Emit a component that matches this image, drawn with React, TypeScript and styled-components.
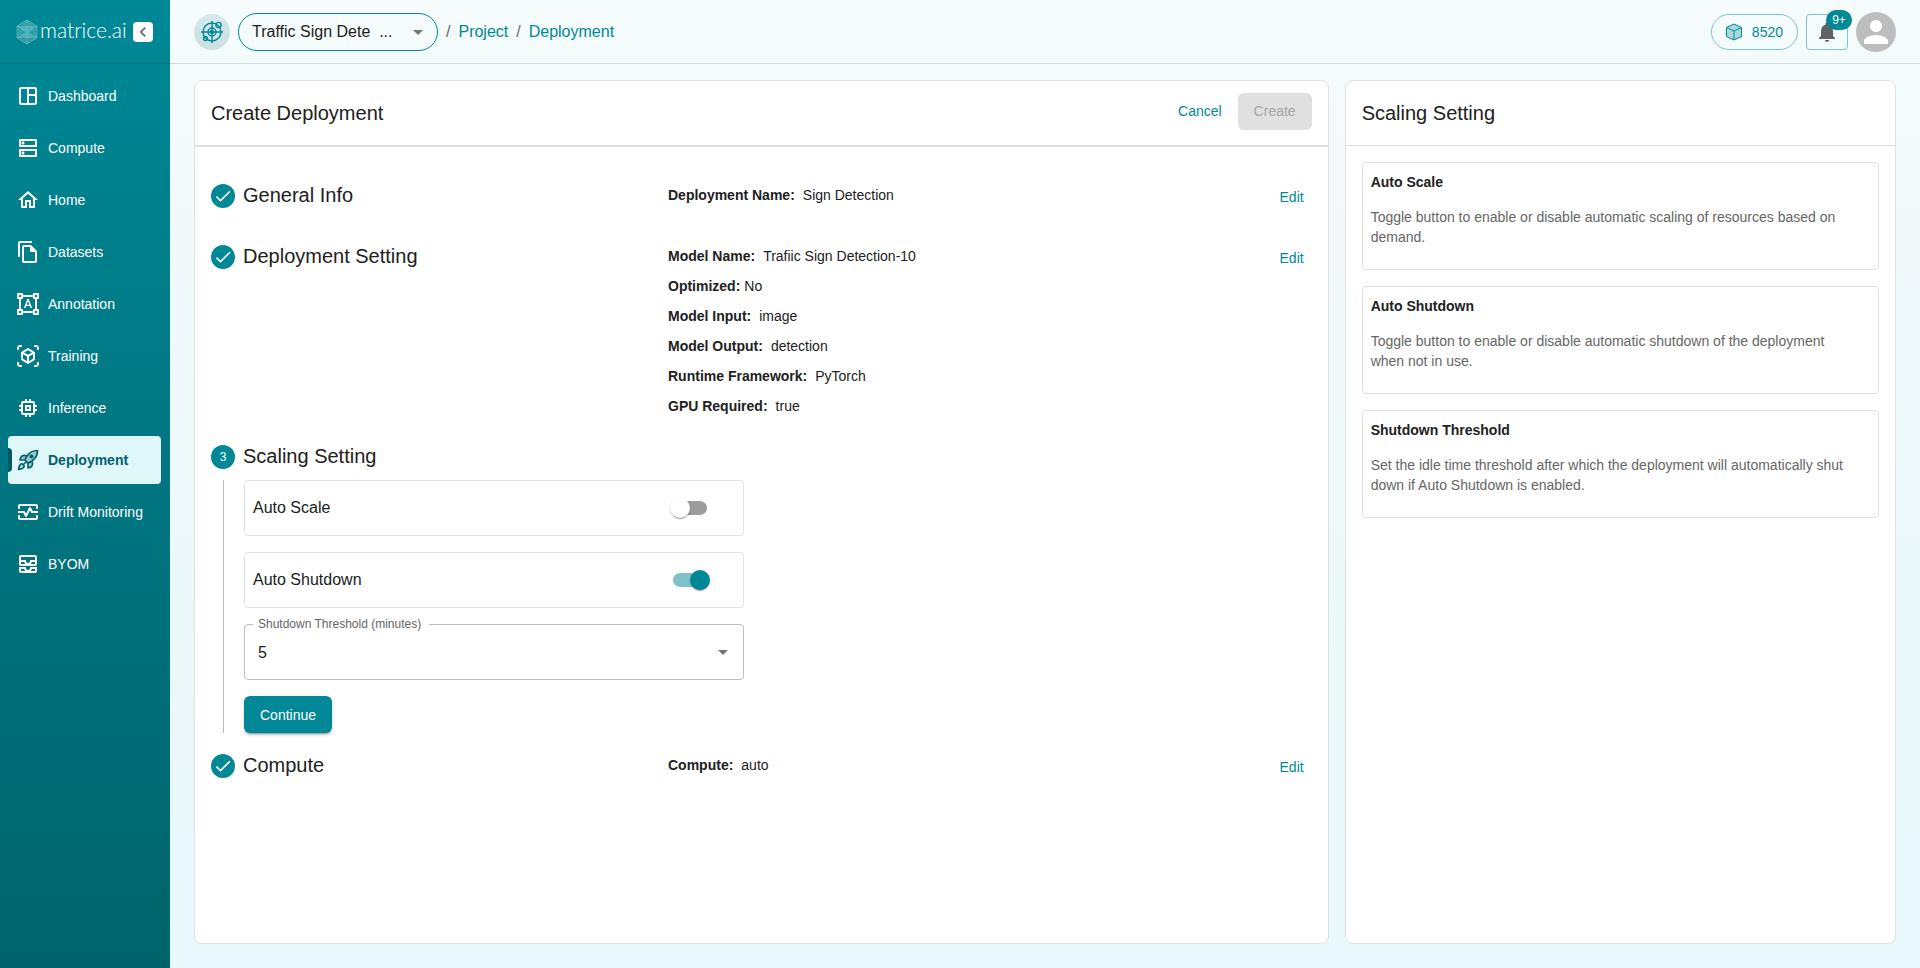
import React, { useState } from "react";
import styled, { createGlobalStyle, css } from "styled-components";
import {
  MdOutlineSpaceDashboard,
  MdOutlineDns,
  MdOutlineHome,
  MdOutlineFileCopy,
  MdFormatShapes,
  MdOutlineViewInAr,
  MdOutlineMemory,
  MdOutlineMonitorHeart,
  MdOutlineAllInbox,
  MdNotifications,
  MdPerson,
  MdArrowDropDown,
  MdCheck,
  MdChevronLeft,
} from "react-icons/md";

const teal = "#008896";
const ink = "#212121";
const line = "#e0e0e0";

const GlobalStyle = createGlobalStyle`
  *, *::before, *::after { box-sizing: border-box; }
  body {
    margin: 0;
    font-family: "Liberation Sans", Arial, sans-serif;
    font-size: 14px;
    line-height: 20px;
    color: ${ink};
  }
  h1, h2, h3, p, dl, dd, ul { margin: 0; padding: 0; }
  button, input, select { font-family: inherit; }
`;

const Page = styled.div`
  display: flex;
  min-height: 100vh;
  background: linear-gradient(180deg, #f5fcfb 0%, #f1f9fb 25%, #ecf9fa 60%, #e8f8fd 100%);
`;

const Sidebar = styled.aside`
  flex: 0 0 170px;
  display: flex;
  flex-direction: column;
  background: linear-gradient(180deg, ${teal} 0%, #00636b 100%);
`;

const Brand = styled.div`
  display: flex;
  align-items: center;
  height: 64px;
  padding-left: 16px;
  border-bottom: 1px solid rgba(0, 60, 70, 0.35);
`;

const BrandName = styled.span`
  width: 95px;
  padding: 0 0 4px 2px;
  color: #fff;
  font-family: Lato, sans-serif;
  font-size: 21px;
  line-height: 24px;
  font-weight: 300;
`;

const CollapseButton = styled.button`
  display: flex;
  align-items: center;
  justify-content: center;
  width: 20px;
  height: 20px;
  padding: 0;
  border: 0;
  border-radius: 4px;
  background: #fff;
  color: #666;
`;

const NavList = styled.ul`
  list-style: none;
  display: flex;
  flex-direction: column;
  gap: 4px;
  padding: 8px 9px 8px 8px;
`;

const NavLink = styled.a<{ $active?: boolean }>`
  position: relative;
  display: flex;
  align-items: center;
  gap: 8px;
  height: 48px;
  padding-left: 8px;
  border-radius: 4px;
  color: #fff;
  text-decoration: none;
  white-space: nowrap;
  svg { flex: none; }
  ${(p) =>
    p.$active &&
    css`
      background: #e0f7fa;
      color: #00626c;
      font-weight: 700;
      &::before {
        content: "";
        position: absolute;
        left: 0;
        top: 12px;
        width: 4px;
        height: 24px;
        border-radius: 0 4px 4px 0;
        background: #005a63;
      }
    `}
`;

const Main = styled.main`
  flex: 1;
  min-width: 0;
  display: flex;
  flex-direction: column;
`;

const TopBar = styled.header`
  display: flex;
  align-items: center;
  justify-content: space-between;
  height: 64px;
  padding: 0 24px;
  border-bottom: 1px solid #d5dcdd;
`;

const TopGroup = styled.div`
  display: flex;
  align-items: center;
  gap: 8px;
`;

const ProjectBadge = styled.span`
  display: flex;
  align-items: center;
  justify-content: center;
  width: 36px;
  height: 36px;
  border-radius: 50%;
  background: linear-gradient(180deg, #d3eaec, #ccdfe0);
`;

const SelectWrap = styled.label`
  display: grid;
  align-items: center;
  > * { grid-area: 1 / 1; }
  > svg {
    justify-self: end;
    margin-right: 8px;
    color: #757575;
    pointer-events: none;
  }
`;

const ProjectSelect = styled.select`
  appearance: none;
  width: 200px;
  height: 38px;
  padding: 0 32px 0 13px;
  border: 1px solid ${teal};
  border-radius: 19px;
  background: transparent;
  color: ${ink};
  font-size: 16px;
`;

const Crumbs = styled.nav`
  display: flex;
  gap: 8px;
  padding-top: 1px;
  font-size: 16px;
  color: #666;
  a { color: ${teal}; text-decoration: none; }
`;

const Credits = styled.button`
  display: flex;
  align-items: center;
  gap: 8px;
  height: 36px;
  padding: 0 14px 0 12px;
  border: 1px solid #80c3ca;
  border-radius: 18px;
  background: transparent;
  color: ${teal};
  font-size: 14px;
`;

const BellButton = styled.button`
  position: relative;
  display: flex;
  align-items: center;
  justify-content: center;
  width: 42px;
  height: 36px;
  padding: 0;
  border: 1px solid #80c3ca;
  border-radius: 4px;
  background: transparent;
  color: #616161;
`;

const BellCount = styled.span`
  position: absolute;
  top: -5px;
  right: -5px;
  min-width: 26px;
  height: 20px;
  border-radius: 10px;
  background: ${teal};
  color: #fff;
  font-size: 12px;
  line-height: 20px;
  text-align: center;
`;

const Avatar = styled.span`
  display: flex;
  align-items: center;
  justify-content: center;
  width: 40px;
  height: 40px;
  border-radius: 50%;
  background: #bdbdbd;
  color: #fff;
`;

const Content = styled.div`
  flex: 1;
  display: flex;
  gap: 16px;
  padding: 16px 24px 24px;
`;

const Panel = styled.section<{ $grow?: boolean }>`
  flex: ${(p) => (p.$grow ? "1136" : "551")} 1 0;
  min-width: 0;
  border: 1px solid ${line};
  border-radius: 8px;
  background: #fff;
`;

const PanelHead = styled.div<{ $thick?: boolean }>`
  display: flex;
  align-items: center;
  justify-content: space-between;
  min-height: ${(p) => (p.$thick ? "66px" : "65px")};
  padding: 0 16px;
  border-bottom: ${(p) => (p.$thick ? "2px" : "1px")} solid ${line};
`;

const Title = styled.h1`
  font-size: 20px;
  line-height: 32px;
  font-weight: 400;
`;

const Actions = styled.div`
  display: flex;
  gap: 8px;
  padding-bottom: 4px;
`;

const Button = styled.button<{ $kind?: "text" | "solid"; $height?: number }>`
  height: ${(p) => p.$height ?? 37}px;
  padding: 0 ${(p) => (p.$kind === "text" ? "8px" : "16px")};
  border: 0;
  border-radius: 6px;
  background: ${(p) => (p.$kind === "text" ? "transparent" : teal)};
  color: ${(p) => (p.$kind === "text" ? teal : "#fff")};
  font-size: 14px;
  ${(p) =>
    p.$kind === "solid" &&
    css`
      box-shadow: 0 3px 1px -2px rgba(0, 0, 0, 0.2), 0 2px 2px rgba(0, 0, 0, 0.14), 0 1px 5px rgba(0, 0, 0, 0.12);
    `}
  &:disabled { background: ${line}; color: #a6a6a6; box-shadow: none; }
`;

const Steps = styled.div`
  display: flex;
  flex-direction: column;
  gap: 16px;
  padding: 32px 16px;
`;

const StepRow = styled.section`
  display: grid;
  grid-template-columns: 457px 1fr auto;
  align-items: start;
  min-height: 45px;
`;

const StepHead = styled.div`
  display: flex;
  align-items: flex-start;
  gap: 8px;
  height: 32px;
`;

const StepTitle = styled.h2`
  font-size: 20px;
  line-height: 32px;
  font-weight: 400;
`;

const StepDot = styled.span`
  display: flex;
  align-items: center;
  justify-content: center;
  width: 24px;
  height: 24px;
  margin-top: 5px;
  border-radius: 50%;
  background: ${teal};
  color: #fff;
  font-size: 12px;
`;

const Facts = styled.dl`
  display: flex;
  flex-direction: column;
  gap: 10px;
  padding: 6px 0 8px;
`;

const Fact = styled.div<{ $tight?: boolean }>`
  display: flex;
  gap: ${(p) => (p.$tight ? "4px" : "8px")};
  dt { font-weight: 700; }
`;

const StepBody = styled.div`
  display: flex;
  flex-direction: column;
  align-items: flex-start;
  gap: 16px;
  margin: 8px 0 0 12px;
  padding-left: 20px;
  border-left: 1px solid #bdbdbd;
`;

const SettingRow = styled.label`
  display: flex;
  align-items: center;
  justify-content: space-between;
  width: 500px;
  max-width: 100%;
  height: 56px;
  padding: 0 33px 0 8px;
  border: 1px solid ${line};
  border-radius: 4px;
  font-size: 16px;
`;

const Switch = styled.input`
  appearance: none;
  position: relative;
  display: flex;
  align-items: center;
  width: 40px;
  height: 20px;
  margin: 0;
  &::before {
    content: "";
    width: 34px;
    height: 14px;
    margin: 0 3px;
    border-radius: 7px;
    background: #9c9c9c;
  }
  &::after {
    content: "";
    position: absolute;
    left: 0;
    width: 20px;
    height: 20px;
    border-radius: 50%;
    background: #fff;
    box-shadow: 0 2px 1px -1px rgba(0, 0, 0, 0.2), 0 1px 1px rgba(0, 0, 0, 0.14), 0 1px 3px rgba(0, 0, 0, 0.12);
  }
  &:checked::before { background: #7fc3ca; }
  &:checked::after { left: auto; right: 0; background: ${teal}; }
`;

const Outlined = styled.fieldset`
  width: 500px;
  max-width: 100%;
  min-width: 0;
  height: 66px;
  margin: -10px 0 0;
  padding: 0;
  border: 1px solid #bdbdbd;
  border-radius: 4px;
  legend {
    margin-left: 8px;
    padding: 0 8px 0 5px;
    font-size: 12px;
    line-height: 20px;
    color: #666;
  }
`;

const ThresholdSelect = styled.select`
  appearance: none;
  width: 100%;
  height: 36px;
  padding: 0 13px;
  border: 0;
  background: transparent;
  color: ${ink};
  font-size: 16px;
`;

const Cards = styled.div`
  display: flex;
  flex-direction: column;
  gap: 16px;
  padding: 16px;
`;

const HelpCard = styled.article`
  padding: 9px 20px 22px 8px;
  border: 1px solid ${line};
  border-radius: 4px;
  h3 { margin-bottom: 15px; font-size: 14px; line-height: 20px; }
  p { color: #666; }
`;

const RocketIcon = () => (
  <svg width="24" height="24" viewBox="0 0 24 24" fill="currentColor" fillOpacity=".3" stroke="currentColor" strokeWidth="1.7" strokeLinejoin="round">
    <path d="M4.500 16.500c-1.500 1.260-2 5-2 5s3.740-.5 5-2c.71-.84.7-2.130-.09-2.910a2.180 2.180 0 0 0-2.910-.09z" fillOpacity=".15" />
    <path d="m12 15-3-3a22 22 0 0 1 2-3.950A12.880 12.880 0 0 1 21.500 2.500c0 2.720-.5 7-5.500 10.500a22.350 22.350 0 0 1-4 2z" />
    <path d="M9 12H4s.55-3.030 2-4c1.620-1.080 5 0 5 0" />
    <path d="M12 15v5s3.030-.55 4-2c1.080-1.620 0-5 0-5" />
    <circle cx="15.500" cy="8.500" r="1.200" fillOpacity="1" />
    <path d="M8 16l2.500-2.500" />
  </svg>
);

const BrandCube = () => (
  <svg width="22" height="26" viewBox="0 0 22 26" fill="#fff" fillOpacity=".18" stroke="#9fd5da" strokeOpacity=".6" strokeWidth=".7">
    <path d="M11 1l10 6v12l-10 6-10-6V7z" />
    <path d="M1 7l10 6 10-6M11 1v24M1 19l10-6 10 6" strokeWidth=".5" />
    <path d="M1 19L11 1l10 18" strokeWidth=".4" fill="none" />
    <path d="M5 10l6 3 6-3M11 13v6" stroke="#2fc4d2" strokeWidth="1" fill="none" />
    <circle cx="11" cy="13" r="1.500" fill="#2fc4d2" fillOpacity="1" stroke="none" />
  </svg>
);

const TargetIcon = () => (
  <svg width="22" height="22" viewBox="0 0 22 22" fill="none" stroke={teal} strokeWidth="1.400">
    <circle cx="11" cy="11" r="9" />
    <circle cx="11" cy="11" r="4" />
    <circle cx="11" cy="11" r="1.500" />
    <path d="M11 0v22M0 11h22" />
    <circle cx="17.500" cy="4" r="2.600" />
    <circle cx="4.500" cy="17.500" r="2" />
  </svg>
);

const CubeIcon = () => (
  <svg width="20" height="20" viewBox="0 0 20 20" fill={teal} fillOpacity=".3" stroke={teal} strokeLinejoin="round">
    <path d="M10 2l7.500 3.500v9L10 18l-7.500-3.500v-9z" />
    <path d="M2.500 5.500L10 9l7.500-3.500M10 9v9" fill="none" />
  </svg>
);

const navItems = [
  { label: "Dashboard", icon: <MdOutlineSpaceDashboard size={24} /> },
  { label: "Compute", icon: <MdOutlineDns size={24} /> },
  { label: "Home", icon: <MdOutlineHome size={24} /> },
  { label: "Datasets", icon: <MdOutlineFileCopy size={24} /> },
  { label: "Annotation", icon: <MdFormatShapes size={24} /> },
  { label: "Training", icon: <MdOutlineViewInAr size={24} /> },
  { label: "Inference", icon: <MdOutlineMemory size={24} /> },
  { label: "Deployment", icon: <RocketIcon />, active: true },
  { label: "Drift Monitoring", icon: <MdOutlineMonitorHeart size={24} /> },
  { label: "BYOM", icon: <MdOutlineAllInbox size={24} /> },
];

const settingFacts: [string, string][] = [
  ["Model Name:", "Trafiic Sign Detection-10"],
  ["Optimized:", "No"],
  ["Model Input:", "image"],
  ["Model Output:", "detection"],
  ["Runtime Framework:", "PyTorch"],
  ["GPU Required:", "true"],
];

const helpCards = [
  ["Auto Scale", "Toggle button to enable or disable automatic scaling of resources based on demand."],
  ["Auto Shutdown", "Toggle button to enable or disable automatic shutdown of the deployment when not in use."],
  ["Shutdown Threshold", "Set the idle time threshold after which the deployment will automatically shut down if Auto Shutdown is enabled."],
];

function DoneStep({ title, facts }: { title: string; facts: [string, string][] }) {
  return (
    <StepRow>
      <StepHead>
        <StepDot><MdCheck size={20} /></StepDot>
        <StepTitle>{title}</StepTitle>
      </StepHead>
      <Facts>
        {facts.map(([name, value]) => (
          <Fact key={name} $tight={name === "Optimized:"}>
            <dt>{name}</dt>
            <dd>{value}</dd>
          </Fact>
        ))}
      </Facts>
      <Button $kind="text" $height={36} aria-label={`Edit ${title}`}>Edit</Button>
    </StepRow>
  );
}

export default function App() {
  const [autoScale, setAutoScale] = useState(false);
  const [autoShutdown, setAutoShutdown] = useState(true);
  return (
    <>
      <GlobalStyle />
      <Page>
        <Sidebar>
          <Brand>
            <BrandCube />
            <BrandName>matrice.ai</BrandName>
            <CollapseButton aria-label="Collapse sidebar">
              <MdChevronLeft size={20} />
            </CollapseButton>
          </Brand>
          <NavList>
            {navItems.map((item) => (
              <li key={item.label}>
                <NavLink href="#" $active={item.active}>
                  {item.icon}
                  {item.label}
                </NavLink>
              </li>
            ))}
          </NavList>
        </Sidebar>
        <Main>
          <TopBar>
            <TopGroup>
              <ProjectBadge><TargetIcon /></ProjectBadge>
              <SelectWrap>
                <ProjectSelect aria-label="Project">
                  <option>{"Traffic Sign Dete \u00a0..."}</option>
                </ProjectSelect>
                <MdArrowDropDown size={24} />
              </SelectWrap>
              <Crumbs>
                <span>/</span>
                <a href="#">Project</a>
                <span>/</span>
                <a href="#">Deployment</a>
              </Crumbs>
            </TopGroup>
            <TopGroup>
              <Credits><CubeIcon />8520</Credits>
              <BellButton aria-label="Notifications">
                <MdNotifications size={24} />
                <BellCount>9+</BellCount>
              </BellButton>
              <Avatar><MdPerson size={36} /></Avatar>
            </TopGroup>
          </TopBar>
          <Content>
            <Panel $grow>
              <PanelHead $thick>
                <Title>Create Deployment</Title>
                <Actions>
                  <Button $kind="text">Cancel</Button>
                  <Button disabled>Create</Button>
                </Actions>
              </PanelHead>
              <Steps>
                <DoneStep title="General Info" facts={[["Deployment Name:", "Sign Detection"]]} />
                <DoneStep title="Deployment Setting" facts={settingFacts} />
                <section>
                  <StepHead>
                    <StepDot>3</StepDot>
                    <StepTitle>Scaling Setting</StepTitle>
                  </StepHead>
                  <StepBody>
                    <SettingRow>
                      Auto Scale
                      <Switch type="checkbox" role="switch" checked={autoScale} onChange={(e) => setAutoScale(e.target.checked)} />
                    </SettingRow>
                    <SettingRow>
                      Auto Shutdown
                      <Switch type="checkbox" role="switch" checked={autoShutdown} onChange={(e) => setAutoShutdown(e.target.checked)} />
                    </SettingRow>
                    <Outlined>
                      <legend><label htmlFor="threshold">Shutdown Threshold (minutes)</label></legend>
                      <SelectWrap htmlFor="threshold">
                        <ThresholdSelect id="threshold">
                          <option>5</option>
                        </ThresholdSelect>
                        <MdArrowDropDown size={24} />
                      </SelectWrap>
                    </Outlined>
                    <Button $kind="solid">Continue</Button>
                  </StepBody>
                </section>
                <DoneStep title="Compute" facts={[["Compute:", "auto"]]} />
              </Steps>
            </Panel>
            <Panel>
              <PanelHead>
                <Title as="h2">Scaling Setting</Title>
              </PanelHead>
              <Cards>
                {helpCards.map(([title, body]) => (
                  <HelpCard key={title}>
                    <h3>{title}</h3>
                    <p>{body}</p>
                  </HelpCard>
                ))}
              </Cards>
            </Panel>
          </Content>
        </Main>
      </Page>
    </>
  );
}
